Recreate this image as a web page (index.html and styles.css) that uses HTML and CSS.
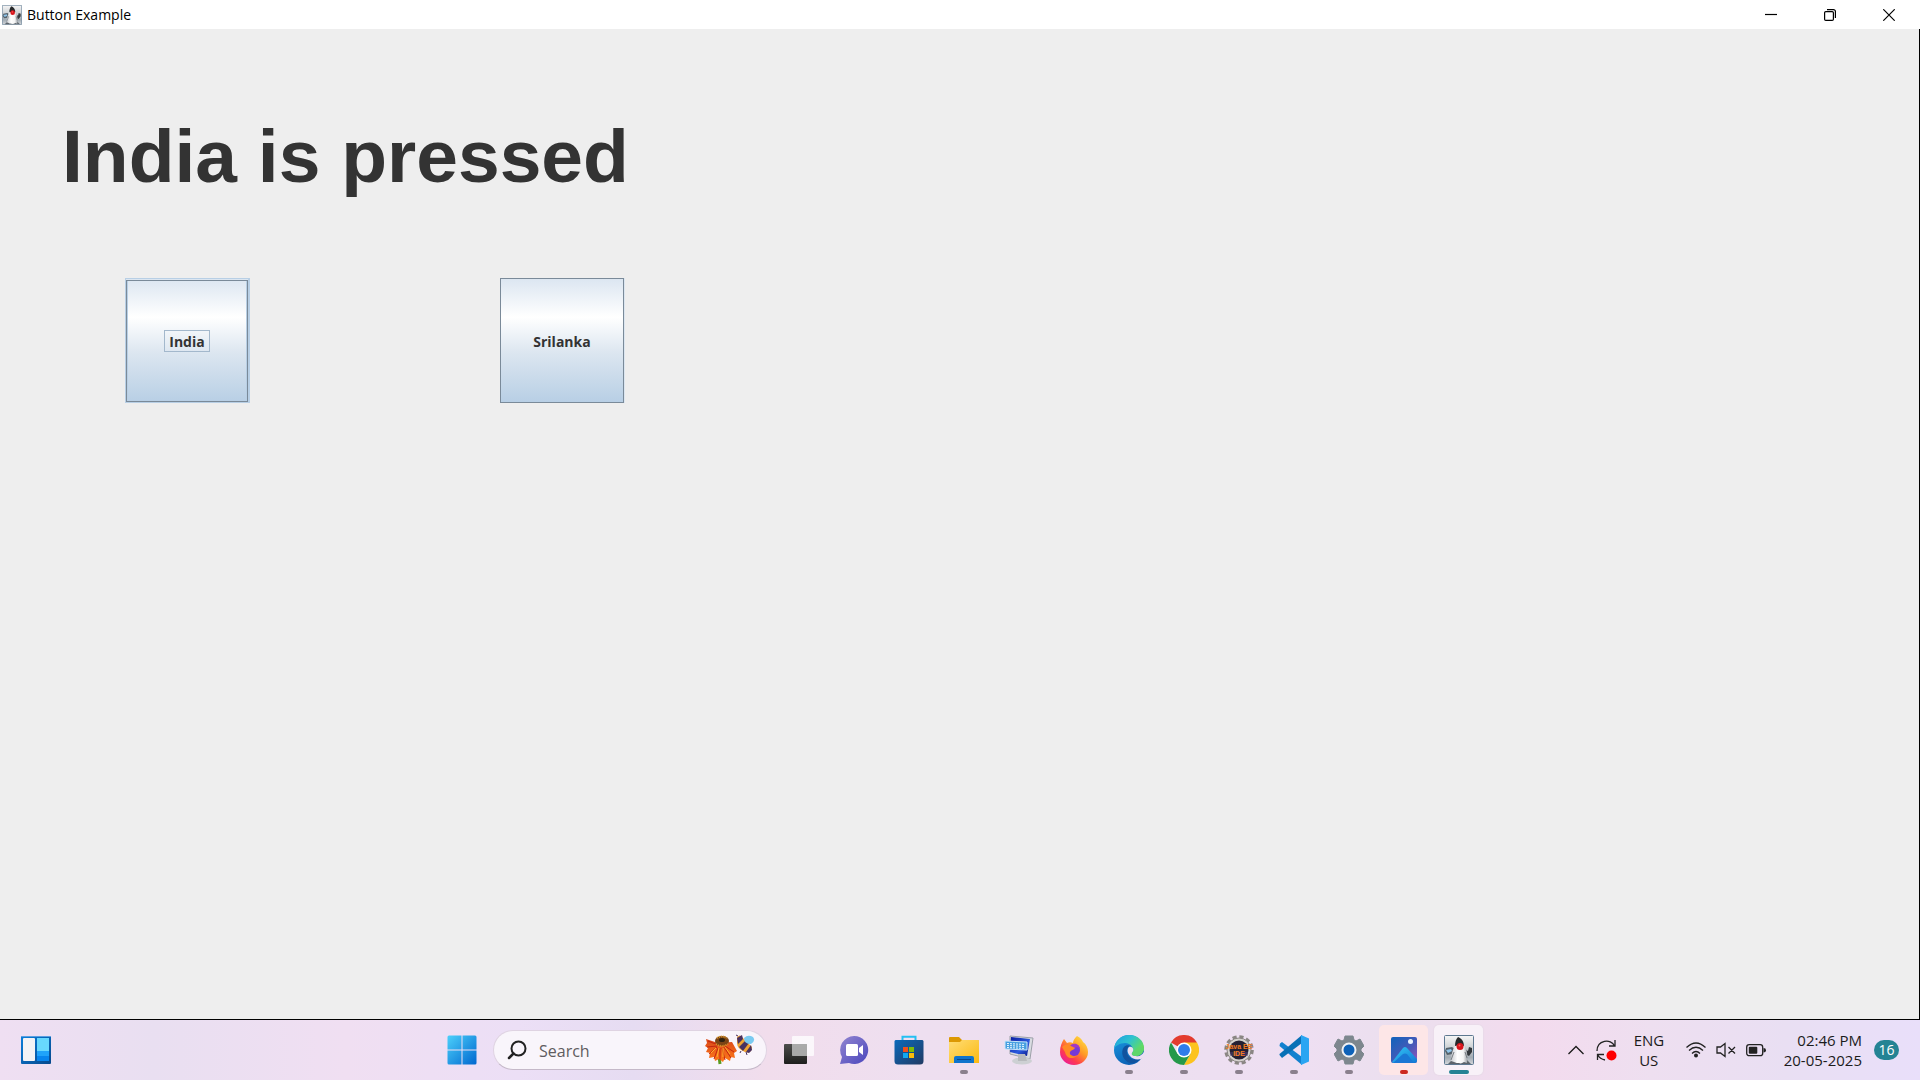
FILE: index.html
```html
<!DOCTYPE html>
<html lang="en">
<head>
<meta charset="utf-8">
<title>Button Example</title>
<link rel="stylesheet" href="styles.css">
</head>
<body>
<svg class="defs" aria-hidden="true">
  <defs>
    <linearGradient id="silver" x1="0" y1="0" x2="0" y2="1"><stop offset="0" stop-color="#f6f6f6"/><stop offset=".4" stop-color="#cfd3d6"/><stop offset=".75" stop-color="#a2abb3"/><stop offset="1" stop-color="#d4d8dc"/></linearGradient>
    <linearGradient id="belly" x1="0" y1="0" x2="1" y2="0"><stop offset="0" stop-color="#c9ccd0"/><stop offset=".4" stop-color="#fff"/><stop offset=".75" stop-color="#f4f4f4"/><stop offset="1" stop-color="#9da2a7"/></linearGradient>
    <linearGradient id="win" x1="0" y1="0" x2="1" y2="1"><stop offset="0" stop-color="#4cd0fb"/><stop offset="1" stop-color="#0067cf"/></linearGradient>
    <linearGradient id="widget" x1="0" y1="0" x2="1" y2="1"><stop offset="0" stop-color="#0b80dc"/><stop offset="1" stop-color="#07488c"/></linearGradient>
    <linearGradient id="dark" x1="0" y1="0" x2="0" y2="1"><stop offset="0" stop-color="#4d4d4b"/><stop offset="1" stop-color="#1e1e1d"/></linearGradient>
    <linearGradient id="chat" x1="0" y1="0" x2="1" y2="1"><stop offset="0" stop-color="#9286d0"/><stop offset="1" stop-color="#4a46bd"/></linearGradient>
    <linearGradient id="store" x1="0" y1="0" x2="1" y2="1"><stop offset="0" stop-color="#0b6abb"/><stop offset="1" stop-color="#213a63"/></linearGradient>
    <linearGradient id="folder" x1="0" y1="0" x2="1" y2="1"><stop offset="0" stop-color="#ffdd76"/><stop offset="1" stop-color="#fbb910"/></linearGradient>
    <linearGradient id="screen" x1="0" y1="0" x2="1" y2="1"><stop offset="0" stop-color="#0a1c9e"/><stop offset=".6" stop-color="#2b5be0"/><stop offset="1" stop-color="#0a1480"/></linearGradient>
    <linearGradient id="fox" x1="1" y1="0" x2=".2" y2="1"><stop offset="0" stop-color="#fff14a"/><stop offset=".45" stop-color="#ff9a26"/><stop offset=".75" stop-color="#ff3b4e"/><stop offset="1" stop-color="#e81aa0"/></linearGradient>
    <linearGradient id="edgetop" x1="0" y1="0" x2="1" y2=".6"><stop offset="0" stop-color="#1b9ee2"/><stop offset=".5" stop-color="#2fc2cf"/><stop offset="1" stop-color="#69e04f"/></linearGradient>
    <linearGradient id="edgelow" x1="0" y1="0" x2=".5" y2="1"><stop offset="0" stop-color="#1b9de3"/><stop offset="1" stop-color="#0b5fb4"/></linearGradient>
    <linearGradient id="photo" x1="0" y1="0" x2="1" y2="1"><stop offset="0" stop-color="#0f63bb"/><stop offset=".6" stop-color="#4a59b8"/><stop offset="1" stop-color="#9a55bd"/></linearGradient>
    <linearGradient id="hill" x1="0" y1="0" x2="1" y2="1"><stop offset="0" stop-color="#35c8f5"/><stop offset="1" stop-color="#1278d4"/></linearGradient>
    <linearGradient id="petal" x1="0" y1="0" x2="0" y2="1"><stop offset="0" stop-color="#d9481a"/><stop offset="1" stop-color="#ff7a1a"/></linearGradient>
    <symbol id="duke" viewBox="0 0 30 30">
      <rect x=".5" y=".5" width="29" height="29" rx="1" fill="url(#silver)" stroke="#5d7890"/>
      <path d="M1 16l1-3 6-1 3 2-2 5-6 1z" fill="#54616b"/><path d="M2 15l5-1 1 2-4 2z" fill="#8fc4ea"/>
      <path d="M19 13l5 3 1-4 3 1v4l-3 4-6-3z" fill="#33373b"/>
      <path d="M4 29l4-4h15l4 4z" fill="#5c646b"/>
      <path d="M12 9h8c3 4 4 12 3 19l-3-1c-2 1-3 2-5 1-2 0-3 0-5-1l-3-1c0-6 2-13 5-17z" fill="url(#belly)"/>
      <path d="M10 17l-3 8M21 17l2 6" stroke="#777d83" fill="none"/>
      <path d="M14 2c3 1 6 4 6 9-2-1-6-1-9 0 0-4 1-7 3-9z" fill="#26282a"/>
      <circle cx="16" cy="11.500" r="3.500" fill="#d8141c"/><circle cx="15.500" cy="10.500" r="1" fill="#ff5a55"/>
    </symbol>
  </defs>
</svg>

<header class="titlebar">
  <svg class="app-icon"><use href="#duke"/></svg>
  <span class="app-title">Button Example</span>
  <div class="window-controls">
    <button type="button" aria-label="Minimize"><svg viewBox="0 0 12 12"><path d="M0 5.500h12"/></svg></button>
    <button type="button" aria-label="Restore"><svg viewBox="0 0 12 12"><rect x=".6" y="2.600" width="8.800" height="8.800" rx="1.200"/><path d="M3 .6h6.400a2 2 0 0 1 2 2V9"/></svg></button>
    <button type="button" aria-label="Close"><svg viewBox="0 0 12 12"><path d="M.3.3l11.400 11.400M11.700.3L.3 11.700"/></svg></button>
  </div>
</header>

<main class="client">
  <h1 class="message">India is pressed</h1>
  <div class="choices">
    <button type="button" class="choice choice-focused"><span>India</span></button>
    <button type="button" class="choice"><span>Srilanka</span></button>
  </div>
</main>

<footer class="taskbar">
  <div class="taskbar-start">
    <button type="button" class="plain" aria-label="Widgets"><svg class="icon" viewBox="0 0 30 30"><rect y="1" width="30" height="28" rx="1" fill="url(#widget)"/><path d="M0 1.500h30" stroke="#5a9fe0"/><rect x="2" y="3" width="12" height="23" rx="1" fill="#f3f3f5"/><rect x="16" y="3" width="12" height="13" fill="#68d8fd"/><rect x="16" y="16" width="12" height="5" fill="#1fa3fa"/><rect x="16" y="21" width="12" height="5" fill="#0785ee"/></svg></button>
  </div>

  <nav class="apps" aria-label="Taskbar">
    <button type="button" class="app" aria-label="Start"><svg class="icon" viewBox="0 0 30 30"><path fill="url(#win)" d="M2 .5h12.500v14H.5V2A1.500 1.500 0 0 1 2 .5zM15.500 .5H28A1.500 1.500 0 0 1 29.500 2v12.500h-14zM.5 15.500h14v14H2A1.500 1.500 0 0 1 .5 28zM15.500 15.500h14V28a1.500 1.500 0 0 1-1.500 1.500H15.500z"/></svg></button>
    <label class="search">
      <svg class="search-icon" viewBox="0 0 20 20"><circle cx="11.500" cy="8.500" r="7" fill="none" stroke="#222" stroke-width="2"/><path d="M6.500 13.500L2 18" stroke="#222" stroke-width="2.500" stroke-linecap="round"/></svg>
      <input type="search" placeholder="Search" aria-label="Search">
      <svg class="doodle" viewBox="0 0 50 32">
        <path d="M14 22l1 8" stroke="#5b9a1e" stroke-width="3"/>
        <path d="M13 9L1 5l1 4-2 3 3 2-2 4 4 1-1 5 5-1 1 4 4-2 4 3 2-4 5 3 1-4 4 1-1-5 3-2-5-9z" fill="url(#petal)"/>
        <path d="M13 11L3 7M12 12L2 13M12 13L4 20M13 14L9 25M15 14v12M17 14l3 12M19 13l7 11M20 12l9 6" stroke="#c4260f"/>
        <path d="M11 14l-5 5M14 14l-2 9M18 14v9M20 13l5 7" stroke="#ffae2c"/>
        <ellipse cx="17" cy="7" rx="7" ry="5" fill="#7a4314"/><ellipse cx="17" cy="6" rx="3" ry="2" fill="#2f2210"/><path d="M11 10q6 4 12 0M12 4q5-3 10 0" stroke="#d9992c" stroke-width="2" stroke-dasharray="1 1" fill="none"/>
        <path d="M32 3q3-3 5 0l10 10q0 7-7 5-8-3-8-9z" fill="#f1a333"/>
        <path d="M32 4l5-3 1 4-5 5zM34 13l7-7 3 3-6 8zM41 18l5-7 1 5-3 3z" fill="#483160"/>
        <path d="M39 4q4-4 9-1 3 4-2 7-7 0-7-6z" fill="#7acbf1"/><path d="M36 17l-1 2M41 18l1 3M33 2l-2-1" stroke="#483160"/>
      </svg>
    </label>
    <button type="button" class="app" aria-label="Task view"><svg class="icon" viewBox="0 0 30 30"><rect y="9" width="23" height="20" rx="1" fill="url(#dark)"/><rect x="8" y="1" width="22" height="20" rx="1" fill="#fff" opacity=".75"/><path d="M8 9h15v12H8z" fill="#8f8f8f" opacity=".6"/></svg></button>
    <button type="button" class="app" aria-label="Chat"><svg class="icon" viewBox="0 0 30 30"><path d="M15 1a14 14 0 1 1-5 27l-9 1 2-7A14 14 0 0 1 15 1z" fill="url(#chat)"/><rect x="7" y="9" width="12" height="12" rx="1.500" fill="#fff"/><path d="M20 13l4-3v10l-4-3z" fill="#fff"/></svg></button>
    <button type="button" class="app" aria-label="Microsoft Store"><svg class="icon" viewBox="0 0 30 30"><path d="M8.500 6V1.800h13V6" fill="none" stroke="#25c0f2" stroke-width="2"/><path d="M1.500 5h27l1 1v20a3.500 3.500 0 0 1-3.500 3.500H4A3.500 3.500 0 0 1 .5 26V6z" fill="url(#store)"/><path d="M9 12h5v5H9z" fill="#f1511b"/><path d="M15 12h5v5h-5z" fill="#80bc06"/><path d="M9 18h5v5H9z" fill="#12a9f0"/><path d="M15 18h5v5h-5z" fill="#fbbc09"/></svg></button>
    <button type="button" class="app running" aria-label="File Explorer"><svg class="icon" viewBox="0 0 30 30"><path d="M0 3q0-1 1-1h9l3 3h16l1 1v5H0z" fill="#dc9903"/><path d="M0 7h11l2-2h16l1 1v22H0z" fill="url(#folder)"/><path d="M5 28v-5q0-2 2-2h16q2 0 2 2v5z" fill="#0f74cc"/><path d="M8 24.500h14" stroke="#08498c"/></svg></button>
    <button type="button" class="app" aria-label="On-screen keyboard"><svg class="icon" viewBox="0 0 30 30"><path d="M6 1l23 2-3 21-20-5z" fill="#d9dce1" stroke="#9ca0a8"/><path d="M7 2l19 2-3 17-17-4z" fill="url(#screen)"/><ellipse cx="18" cy="26" rx="10" ry="3.500" fill="#cdd0d3"/><path d="M14 19h7l2 7h-9z" fill="#b7babd"/><path d="M1 6l22 1v8L1 14z" fill="#469fe0" stroke="#c9e5fa"/><path d="M3 8.500l18 1M3 10.500l18 1M3 12.500l18 1" stroke="#eefaff" stroke-dasharray="2 1"/></svg></button>
    <button type="button" class="app" aria-label="Firefox"><svg class="icon" viewBox="0 0 30 30"><path d="M18 1c4 2 5 4 6 6 3 2 5 6 5 10a14 13 0 0 1-28 0C1 11 3 7 5 4l3 4c2-1 4-1 6 0 0-3 2-5 4-7z" fill="url(#fox)"/><circle cx="15" cy="15" r="6" fill="#7839d7"/><path d="M14 9c4-1 7 2 7 5-2-2-4-2-5-1l-3 2-4-2z" fill="#a337c6"/><path d="M3 12c3-3 7-3 9-1l4 2c-1 2-4 2-5 4-1 3 3 5 7 4-5 4-11 2-12-4z" fill="#ff8a25"/></svg></button>
    <button type="button" class="app running" aria-label="Edge"><svg class="icon" viewBox="0 0 30 30"><circle cx="15" cy="15" r="15" fill="url(#edgelow)"/><path d="M0 14C1 5 8 0 15 0c9 0 15 6 15 13 0 5-4 8-8 8-3 0-5-1-4-3 3-4-1-10-7-10-5 0-10 3-11 6z" fill="url(#edgetop)"/><path d="M10 12c-4 5-1 14 6 16 4 1 8-1 11-5-7 4-15 0-14-8 0-2 2-4 4-4-3-1-5-1-7 1z" fill="#11539e"/><path d="M15 12c5-1 5 4 3 6-1 2 1 3 4 3 3 1 6-1 8-4v5l-3 2c-4 1-9 0-11-3-3-3-3-7-1-9z" fill="#ecdff0"/><path d="M19 17c-2 2 0 4 3 4 4 0 7-3 8-7 0-3-6-3-11 3z" fill="#5fd66a"/></svg></button>
    <button type="button" class="app running" aria-label="Chrome"><svg class="icon" viewBox="0 0 30 30"><path d="M15 15L2 7.500A15 15 0 0 1 28 7.500z" fill="#e33b2e"/><path d="M15 15V7.500h13A15 15 0 0 1 15 30l6.500-11.300z" fill="#fcc31e"/><path d="M15 15l6.500 3.700L15 30A15 15 0 0 1 2 7.500l6.500 11.200z" fill="#25994a"/><circle cx="15" cy="15" r="7.500" fill="#fff"/><circle cx="15" cy="15" r="6" fill="#2f7cea"/></svg></button>
    <button type="button" class="app running" aria-label="Eclipse Java EE IDE"><svg class="icon" viewBox="0 0 30 30"><circle cx="15" cy="15" r="12.800" fill="none" stroke="#8a8683" stroke-width="4" stroke-dasharray="4 2.700"/><circle cx="15" cy="15" r="12" fill="#d5d2ce" stroke="#8a8683"/><circle cx="15" cy="15" r="9.500" fill="#242033"/><path d="M6 18h18M6 20h18" stroke="#514577"/><text x="15" y="14" class="ee">Java EE</text><text x="15" y="21" class="ee">IDE</text></svg></button>
    <button type="button" class="app running" aria-label="Visual Studio Code"><svg class="icon" viewBox="0 0 30 30"><path d="M1 8.500l2-1.500 20 15v8L.5 11z" fill="#1181cf"/><path d="M23 0v8L3 23l-2.500-3v-1z" fill="#0870b6"/><path d="M22 0l8 3.500v23L22 30z" fill="#2aa5f2"/></svg></button>
    <button type="button" class="app running" aria-label="Settings"><svg class="icon" viewBox="0 0 30 30"><path d="M11 1h8l1 4 2 1 4-2 4 7-3 3v2l3 3-4 7-4-2-2 1-1 4h-8l-1-4-2-1-4 2-4-7 3-3v-2l-3-3 4-7 4 2 2-1z" fill="#7d878e" stroke="#7d878e" stroke-linejoin="round"/><circle cx="15" cy="15" r="6.500" fill="#0d62b8" stroke="#f0f2f5" stroke-width="2"/></svg></button>
    <button type="button" class="app running alert" aria-label="Photos"><svg class="icon" viewBox="0 0 30 30"><rect x="2" y="2" width="26" height="26" rx="2" fill="url(#photo)"/><circle cx="21.500" cy="6.500" r="2.500" fill="#e8f4ff"/><path d="M3 27L14 13q2-2 4 0l10 11v2q0 2-2 2H4z" fill="url(#hill)"/><path d="M4 28l10-9q2-1 4 0l7 9z" fill="#1a78d5"/></svg></button>
    <button type="button" class="app running active" aria-label="Button Example"><svg class="icon"><use href="#duke"/></svg></button>
  </nav>

  <div class="tray">
    <button type="button" class="plain" aria-label="Show hidden icons"><svg class="chevron" viewBox="0 0 16 10"><path d="M.5 9L8 1.500 15.500 9" fill="none" stroke="#1b1b1b" stroke-width="1.300"/></svg></button>
    <button type="button" class="plain" aria-label="Updates"><svg class="sync" viewBox="0 0 21 21"><g fill="none" stroke="#222" stroke-width="1.300"><path d="M1 11C1 0 15-2 18.500 6M19 0v6h-6M9 20Q4 19 1.800 15M1.500 20v-5.500H8"/></g><circle cx="15.500" cy="15.500" r="5" fill="#fe0000"/></svg></button>
    <button type="button" class="plain language">ENG<br>US</button>
    <button type="button" class="plain status" aria-label="Network, volume and battery">
      <svg viewBox="0 0 20 16"><g fill="none" stroke="#222" stroke-width="1.300"><path d="M.5 5.500Q10-3.500 19.500 5.500M3 8.500q7-6.500 14 0M6 11.500q4-4 8 0"/></g><circle cx="10" cy="13.500" r="2" fill="#222"/></svg>
      <svg viewBox="0 0 20 16"><path d="M1 5h3.500L9 1.500v13L4.500 11H1zM12.500 5l6.500 6.500M19 5l-6.500 6.500" fill="none" stroke="#222" stroke-width="1.300"/></svg>
      <svg viewBox="0 0 20 16"><rect x=".7" y="2.700" width="16" height="11" rx="2.500" fill="none" stroke="#222" stroke-width="1.300"/><rect x="2.800" y="4.800" width="8.500" height="7" rx="1" fill="#222"/><path d="M17.500 6q2.500 0 2.500 2.200t-2.500 2.200z" fill="#222"/></svg>
    </button>
    <button type="button" class="plain clock"><time datetime="2025-05-20T14:46">02:46 PM<br>20-05-2025</time></button>
    <button type="button" class="plain count" aria-label="16 notifications">16</button>
  </div>
</footer>
</body>
</html>
```
FILE: styles.css
```css
* { box-sizing: border-box; }

body {
  margin: 0;
  min-height: 100vh;
  display: flex;
  flex-direction: column;
  background: #eee;
  font-family: "Open Sans", "Noto Sans", sans-serif;
  color: #1b1b1b;
}

button, input { font: inherit; color: inherit; padding: 0; border: 0; background: none; }
svg { display: block; flex: none; }
.defs { position: absolute; width: 0; height: 0; }

/* Window frame */
.titlebar {
  display: flex;
  align-items: center;
  height: 29px;
  padding-left: 2px;
  background: #fff;
  color: #000;
  font-size: 14px;
}
.app-icon { width: 20px; height: 20px; }
.app-title { margin-left: 5px; }
.window-controls { display: flex; margin-left: auto; align-self: stretch; padding-right: 2px; }
.window-controls button { width: 59px; display: grid; place-items: center; }
.window-controls svg { width: 12px; height: 12px; fill: none; stroke: #000; stroke-width: 1.2; }

.client {
  flex: 1;
  padding: 84px 62px 0;
  border-right: 1px solid #000;
  border-bottom: 1px solid #000;
}
.message {
  margin: 0;
  font: bold 75px/86px "Liberation Sans", Arial, sans-serif;
  color: #333;
}
.choices { display: flex; gap: 251px; padding: 79px 63px 0; }
.choice {
  width: 124px;
  height: 125px;
  display: grid;
  place-items: center;
  border: 1px solid #7a8a99;
  background: linear-gradient(#dce6f1, #fff 31%, #dce6f0 60%, #b8cfe5);
  box-shadow: 1px 0 #dce6f0;
  color: #333;
  font-size: 14px;
  font-weight: bold;
  line-height: 19px;
}
.choice span { padding: 1px 4px 0; border: 1px solid transparent; }
.choice-focused {
  border-color: #b8cfe5;
  box-shadow: 1px 0 #b8cfe5, inset 0 1px #dce6f1, inset 0 0 0 1px #7a8a99, inset 0 1px 0 1px #7a8a99, inset 0 0 0 2px #b8cfe5;
}
.choice-focused span { border-color: #a3b8cc; }

/* Taskbar */
.taskbar {
  display: grid;
  grid-template-columns: 1fr auto 1fr;
  align-items: center;
  height: 60px;
  background: linear-gradient(90deg, #efdff2, #e9dff1 8%, #f0dff2 18%, #ecdff6 27%, #e6dcf2 33%, #f1ddec 40%, #eedff0 48%, #ecdff0 58%, #eedff2 68%, #ebdfee 73%, #f3dbee 80%, #eedff0 86%, #e9dff3 93%, #e9dffa);
}
.taskbar-start { display: flex; padding-left: 21px; }
.icon { width: 30px; height: 30px; }
.apps { display: flex; align-items: center; }
.app {
  position: relative;
  width: 49px;
  height: 50px;
  margin: 0 3px;
  display: grid;
  place-items: center;
  border-radius: 5px;
}
.running::after {
  content: "";
  position: absolute;
  bottom: 1px;
  left: 50%;
  width: 8px;
  height: 4px;
  border-radius: 2px;
  transform: translateX(-50%);
  background: #8a808d;
}
.alert { background: #fde6e7; }
.alert::after { background: #cc2a20; }
.active { background: #f8f1f8; box-shadow: 0 0 1px 1px #e9dbe9; }
.active::after { width: 20px; background: #248394; }

.search {
  display: flex;
  align-items: center;
  width: 274px;
  height: 40px;
  margin: 0 4px;
  padding: 0 11px 0 13px;
  border: 1px solid #dfd3e2;
  border-bottom-color: #c5b9c9;
  border-radius: 20px;
  background: #f9f5fb;
}
.search-icon { width: 20px; height: 20px; }
.search input { flex: 1; min-width: 0; margin-left: 12px; padding-top: 2px; font-size: 16px; outline: 0; }
.search input::placeholder { color: #5f5c60; opacity: 1; }
.doodle { width: 50px; height: 32px; }
.ee { font: bold 7px "Liberation Sans", sans-serif; fill: #f47b20; text-anchor: middle; }

.tray {
  display: flex;
  align-items: center;
  justify-content: flex-end;
  padding-right: 21px;
  font-size: 15px;
  line-height: 20px;
}
.chevron { width: 16px; height: 10px; }
.sync { width: 21px; height: 21px; margin-left: 12px; }
.language { width: 30px; margin-left: 17px; }
.status { display: flex; gap: 10px; margin-left: 22px; }
.status svg { width: 20px; height: 16px; }
.clock { margin-left: 18px; text-align: right; }
.count {
  width: 25px;
  height: 20px;
  margin-left: 12px;
  border-radius: 10px;
  background: #248394;
  color: #fff;
  font-size: 14px;
}
```
